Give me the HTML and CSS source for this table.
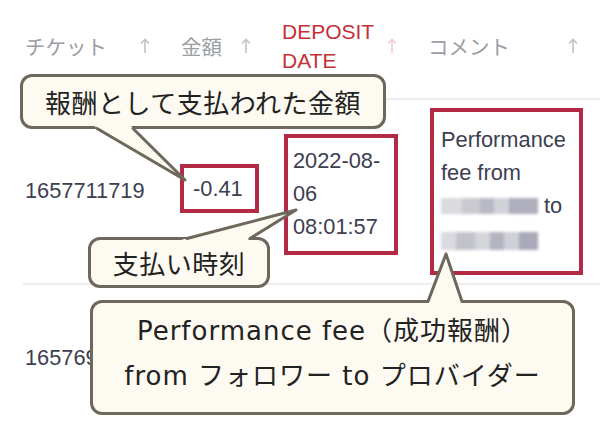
FILE: index.html
```html
<!DOCTYPE html>
<html lang="ja">
<head>
<meta charset="utf-8">
<title>Deposit history</title>
<link rel="stylesheet" href="styles.css">
</head>
<body>
<div class="page">
  <div class="table">
    <div class="row head">
      <div class="th c1"><span>チケット</span><svg class="arrow" viewBox="0 0 10 16"><path d="M5 15V1.5M1 5.5L5 1.5L9 5.5"/></svg></div>
      <div class="th"><span>金額</span><svg class="arrow" viewBox="0 0 10 16"><path d="M5 15V1.5M1 5.5L5 1.5L9 5.5"/></svg></div>
      <div class="th active"><span class="dep">DEPOSIT<br>DATE</span><svg class="arrow pink" viewBox="0 0 10 16"><path d="M5 15V1.5M1 5.5L5 1.5L9 5.5"/></svg></div>
      <div class="th"><span>コメント</span><svg class="arrow" viewBox="0 0 10 16"><path d="M5 15V1.5M1 5.5L5 1.5L9 5.5"/></svg></div>
    </div>
    <div class="row r1">
      <div class="td c1">1657711719</div>
      <div class="td"><span class="mark amount">-0.41</span></div>
      <div class="td"><span class="mark date">2022-08-<br>06<br>08:01:57</span></div>
      <div class="td"><span class="mark comment">Performance<br>fee from<br><span class="blur"></span> to<br><span class="blur b2"></span></span></div>
    </div>
    <div class="row r2">
      <div class="td c1">1657693421</div>
      <div class="td"></div>
      <div class="td"></div>
      <div class="td"></div>
    </div>
  </div>

  <div class="callout co1">報酬として支払われた金額</div>
  <div class="callout co2">支払い時刻</div>
  <div class="callout co3">Performance fee（成功報酬）<br>from フォロワー to プロバイダー</div>

  <svg class="tails" viewBox="0 0 600 428" width="600" height="428">
    <polygon class="fill" points="94,126 185,180 131,126"/>
    <polyline class="edge" points="97,128.5 185,180 133,128.5"/>
    <polygon class="fill" points="177,241 296,210 246,241"/>
    <polyline class="edge" points="187,238.5 296,210 250,238.5"/>
    <polygon class="fill" points="427,304 446,254 463,304"/>
    <polyline class="edge" points="428,301.5 446,254 462,301.5"/>
  </svg>
</div>
</body>
</html>
```
FILE: styles.css
```css
html, body {
  margin: 0;
  padding: 0;
  background: #ffffff;
}
body {
  width: 600px;
  height: 428px;
  overflow: hidden;
  font-family: "Liberation Sans", "Noto Sans CJK JP", sans-serif;
}
.page {
  position: relative;
  width: 600px;
  height: 428px;
  overflow: hidden;
}
.table {
  margin-left: 23px;
  width: 586px;
}
.row {
  display: grid;
  grid-template-columns: 158px 101px 146px 181px;
  border-bottom: 2px solid #eeeeee;
}
.head {
  height: 98px;
}
.th {
  display: flex;
  align-items: center;
  justify-content: space-between;
  padding-right: 31px;
  padding-bottom: 6px;
  font-size: 20.5px;
  color: #9b9da4;
}
.th.c1 { padding-left: 2px; }
.dep {
  font-size: 21px;
  line-height: 29px;
  color: #c62f38;
}
.arrow {
  width: 10px;
  height: 16px;
  fill: none;
  stroke: #c2c4c8;
  stroke-width: 1.6;
}
.arrow.pink { stroke: #f1cdd0; }

.td {
  display: flex;
  align-items: center;
  font-size: 21.8px;
  line-height: 33px;
  color: #3d3e50;
}
.td.c1 { padding-left: 2px; }
.r1 { height: 183px; }
.r1 .td.c1 { padding-bottom: 2px; }
.r2 { height: 144px; }

.mark {
  display: block;
  border: 4px solid #b22a44;
}
.amount {
  margin-left: -1px;
  margin-bottom: 7px;
  padding: 4px 12px 4px 9px;
}
.date {
  margin-left: 2px;
  margin-top: 5px;
  padding: 6px 14px 8px 5px;
}
.comment {
  margin-left: 2px;
  width: 153px;
  box-sizing: border-box;
  padding: 11px 6px 16px 7px;
}
.blur {
  display: inline-block;
  width: 97px;
  height: 16px;
  vertical-align: -1px;
  background: linear-gradient(90deg, #dadadf 0 22%, #c9c9d0 22% 40%, #b9b9c5 40% 55%, #d2d2d9 55% 70%, #aeaebd 70% 100%);
  filter: blur(1.6px);
}
.blur.b2 {
  height: 18px;
  vertical-align: -4px;
  background: linear-gradient(90deg, #d9d9df 0 15%, #c2c2cb 15% 35%, #d5d5dc 35% 50%, #b4b4c1 50% 65%, #cfcfd7 65% 80%, #a9a9b9 80% 100%);
}

.callout {
  position: absolute;
  box-sizing: border-box;
  border: 3px solid #6e675b;
  border-radius: 12px;
  background: #fdfaf1;
  color: #222222;
  font-family: "Noto Sans CJK JP", sans-serif;
  font-size: 26px;
  text-align: center;
  letter-spacing: 0.5px;
}
.co1 {
  left: 20px;
  top: 74px;
  width: 366px;
  height: 55px;
  line-height: 50px;
}
.co2 {
  left: 88px;
  top: 237px;
  width: 182px;
  height: 51px;
  line-height: 46px;
}
.co3 {
  left: 90px;
  top: 300px;
  width: 485px;
  height: 115px;
  padding-top: 6px;
  line-height: 45px;
  font-family: "DejaVu Sans", "Noto Sans CJK JP", sans-serif;
  font-size: 26px;
  letter-spacing: 1px;
}
.tails {
  position: absolute;
  left: 0;
  top: 0;
  pointer-events: none;
}
.tails .fill {
  fill: #fdfaf1;
  stroke: none;
}
.tails .edge {
  fill: none;
  stroke: #6e675b;
  stroke-width: 3;
  stroke-linejoin: round;
  stroke-linecap: round;
}
```
